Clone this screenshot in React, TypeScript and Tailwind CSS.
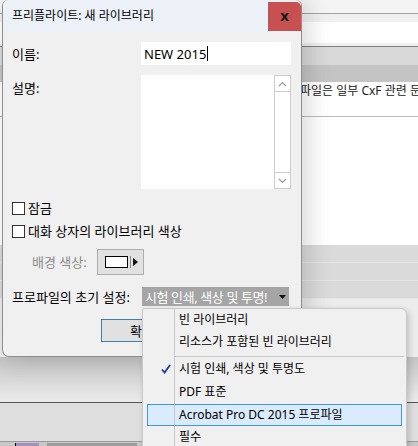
import React from "react"

const font = "font-['Noto_Sans','Noto_Sans_CJK_KR',sans-serif]"

const Checkbox = ({ label }: { label: string }) => (
  <div className="flex h-[16px] items-center">
    <div className="h-[13px] w-[13px] border border-[#333] bg-white" />
    <span className="ml-[3px] text-[13px] leading-[16px]">{label}</span>
  </div>
)

const MenuItem = ({
  label,
  checked,
  active,
  h = "h-[22px]",
}: {
  label: string
  checked?: boolean
  active?: boolean
  h?: string
}) => (
  <div
    className={`mx-[4px] flex items-center border ${h} ${
      active ? "border-[#3a9bd6] bg-[#d9ebfc]" : "border-transparent"
    }`}
  >
    <div className="flex w-[31px] justify-center pl-[4px]">
      {checked && (
        <svg width="10" height="10" viewBox="0 0 10 10">
          <path d="M1 5.5 L3.6 8.6 L9 1" fill="none" stroke="#1f3f9f" strokeWidth="1.8" />
        </svg>
      )}
    </div>
    <span className="text-[12px] leading-[16px] text-black">{label}</span>
  </div>
)

export default function App() {
  return (
    <div className={`relative h-[446px] w-[418px] overflow-hidden bg-[#f0f0f0] text-black ${font}`}>
      {/* underlying application window */}
      <div className="flex flex-col">
        <div className="h-[13px] bg-[#f4f4f4]" />
        <div className="h-[33px] border-t border-[#a3a3a3] bg-[#f0f0f0] pt-[8px]">
          <div className="h-[21px] bg-white" />
        </div>
        <div className="h-[19px] border-t border-[#808080] bg-[#d9d9d9]" />
        <div className="h-[17px] bg-[#c4c4c4]" />
        <div className="h-[34px] bg-white">
          <div className="flex h-[18px] items-center overflow-hidden whitespace-nowrap pl-[300px] text-[12px] text-[#222]">
            파일은 일부 CxF 관련 문
          </div>
        </div>
        <div className="h-[129px] border-t border-[#bdbdbd] bg-white" />
        <div className="h-[18px] border-b border-[#e6e6e6] bg-[#dadada]" />
        <div className="h-[18px] border-b border-[#e6e6e6] bg-[#dadada]" />
        <div className="h-[18px] border-b border-[#e6e6e6] bg-[#dadada]" />
        <div className="h-[58px] bg-[#ececec]" />
        <div className="h-[45px] bg-linear-to-b from-[#c4c4c4] to-[#ebebeb]" />
        <div className="h-px bg-[#555]" />
        <div className="h-[38px] bg-[#dedede]" />
        <div className="h-px bg-[#9a9a9a]" />
        <div className="flex h-[6px] bg-[#c8c8c8] pt-[1px]">
          <div className="ml-[15px] w-px bg-black" />
          <div className="w-[23px] bg-[#a58fbd]" />
          <div className="ml-[8px] w-[90px] bg-[#9d9d9d]" />
        </div>
      </div>

      {/* dialog window */}
      <div className="absolute left-[2px] top-0 flex h-[357px] w-[300px] flex-col rounded-b-[7px] rounded-t-[6px] border-x border-b border-[#8e8e8e] bg-[#f0f0f0] shadow-[6px_2px_24px_rgba(0,0,0,0.16)]">
        <div className="flex h-[32px] rounded-t-[6px] bg-[#ebf1f6]">
          <div className="flex flex-1 items-center pl-[9px] text-[12px] leading-[16px]">프리플라이트: 새 라이브러리</div>
          <div className="mt-[2px] flex h-[29px] w-[33px] items-center justify-center rounded-tr-[5px] bg-[#c75050] pb-[2px] text-[15px] font-bold leading-none text-[#1a1a1a]">
            x
          </div>
        </div>

        <div className="flex flex-col pl-[9px] pr-[10px] text-[13px] leading-[16px]">
          <div className="mt-[10px] flex h-[23px] items-center">
            <span>이름:</span>
            <div className="ml-auto flex h-[23px] w-[150px] items-center bg-white pl-[3px]">
              <span>NEW 2015</span>
              <span className="ml-px h-[15px] w-px bg-black" />
            </div>
          </div>

          <div className="mt-[10px] flex h-[114px]">
            <span className="pt-[5px]">설명:</span>
            <div className="ml-auto flex w-[150px] bg-white">
              <div className="flex-1" />
              <div className="flex w-[17px] flex-col border border-[#cdcdcd]">
                <div className="flex h-[16px] items-center justify-center border-b border-[#cdcdcd]">
                  <svg width="9" height="6" viewBox="0 0 9 6">
                    <path d="M1 5 L4.5 1.5 L8 5" fill="none" stroke="#9a9a9a" strokeWidth="1.2" />
                  </svg>
                </div>
                <div className="flex-1" />
                <div className="flex h-[16px] items-center justify-center border-t border-[#cdcdcd]">
                  <svg width="9" height="6" viewBox="0 0 9 6">
                    <path d="M1 1 L4.5 4.5 L8 1" fill="none" stroke="#9a9a9a" strokeWidth="1.2" />
                  </svg>
                </div>
              </div>
            </div>
          </div>

          <div className="mt-[11px]">
            <Checkbox label="잠금" />
          </div>
          <div className="mt-[7px]">
            <Checkbox label="대화 상자의 라이브러리 색상" />
          </div>

          <div className="mt-[10px] flex h-[26px] items-center pl-[20px]">
            <span className="w-[65px] text-[#8c8c8c]">배경 색상:</span>
            <div className="flex h-[26px] w-[47px] items-center border border-[#adadad] bg-[#e1e1e1] pl-[7px]">
              <div className="h-[12px] w-[23px] border border-black bg-white" />
              <div className="ml-[2px] h-[12px] w-px bg-[#8a8a8a]" />
              <svg className="ml-[2px]" width="5" height="8" viewBox="0 0 5 8">
                <path d="M0 0 L5 4 L0 8 Z" fill="#111" />
              </svg>
            </div>
          </div>

          <div className="mt-[12px] flex h-[19px] items-center">
            <span>프로파일의 초기 설정:</span>
            <div className="ml-auto mr-[2px] flex h-[19px] w-[147px] items-center bg-[#a5a5a5] pl-[3px] pr-[3px] text-white">
              <span className="flex-1 overflow-hidden whitespace-nowrap tracking-[-0.4px]">시험 인쇄, 색상 및 투명!</span>
              <svg width="7" height="4" viewBox="0 0 7 4">
                <path d="M0 0 L7 0 L3.5 4 Z" fill="#111" />
              </svg>
            </div>
          </div>

          <div className="mt-[13px] flex pl-[89px]">
            <div className="flex h-[23px] w-[82px] items-center justify-center border border-[#3c7fb1] bg-[#e1e1e1]">확인</div>
          </div>
        </div>
      </div>

      {/* dropdown menu */}
      <div className="absolute left-[142px] top-[308px] w-[265px] rounded-tl-[2px] rounded-tr-[6px] border border-[#c9c9c9] bg-[#f0f0f0] pb-[20px] shadow-[2px_2px_6px_rgba(0,0,0,0.18)]">
        <div className="absolute bottom-0 left-[31px] top-0 w-px bg-[#c8c8c8]" />
        <MenuItem label="빈 라이브러리" />
        <MenuItem label="리소스가 포함된 빈 라이브러리" />
        <div className="h-[5px] pt-[3px] pl-[32px] pr-[2px]">
          <div className="h-px bg-[#c8c8c8]" />
        </div>
        <MenuItem label="시험 인쇄, 색상 및 투명도" checked />
        <MenuItem label="PDF 표준" h="h-[24px]" />
        <MenuItem label="Acrobat Pro DC 2015 프로파일" active />
        <MenuItem label="필수" />
      </div>
    </div>
  )
}
